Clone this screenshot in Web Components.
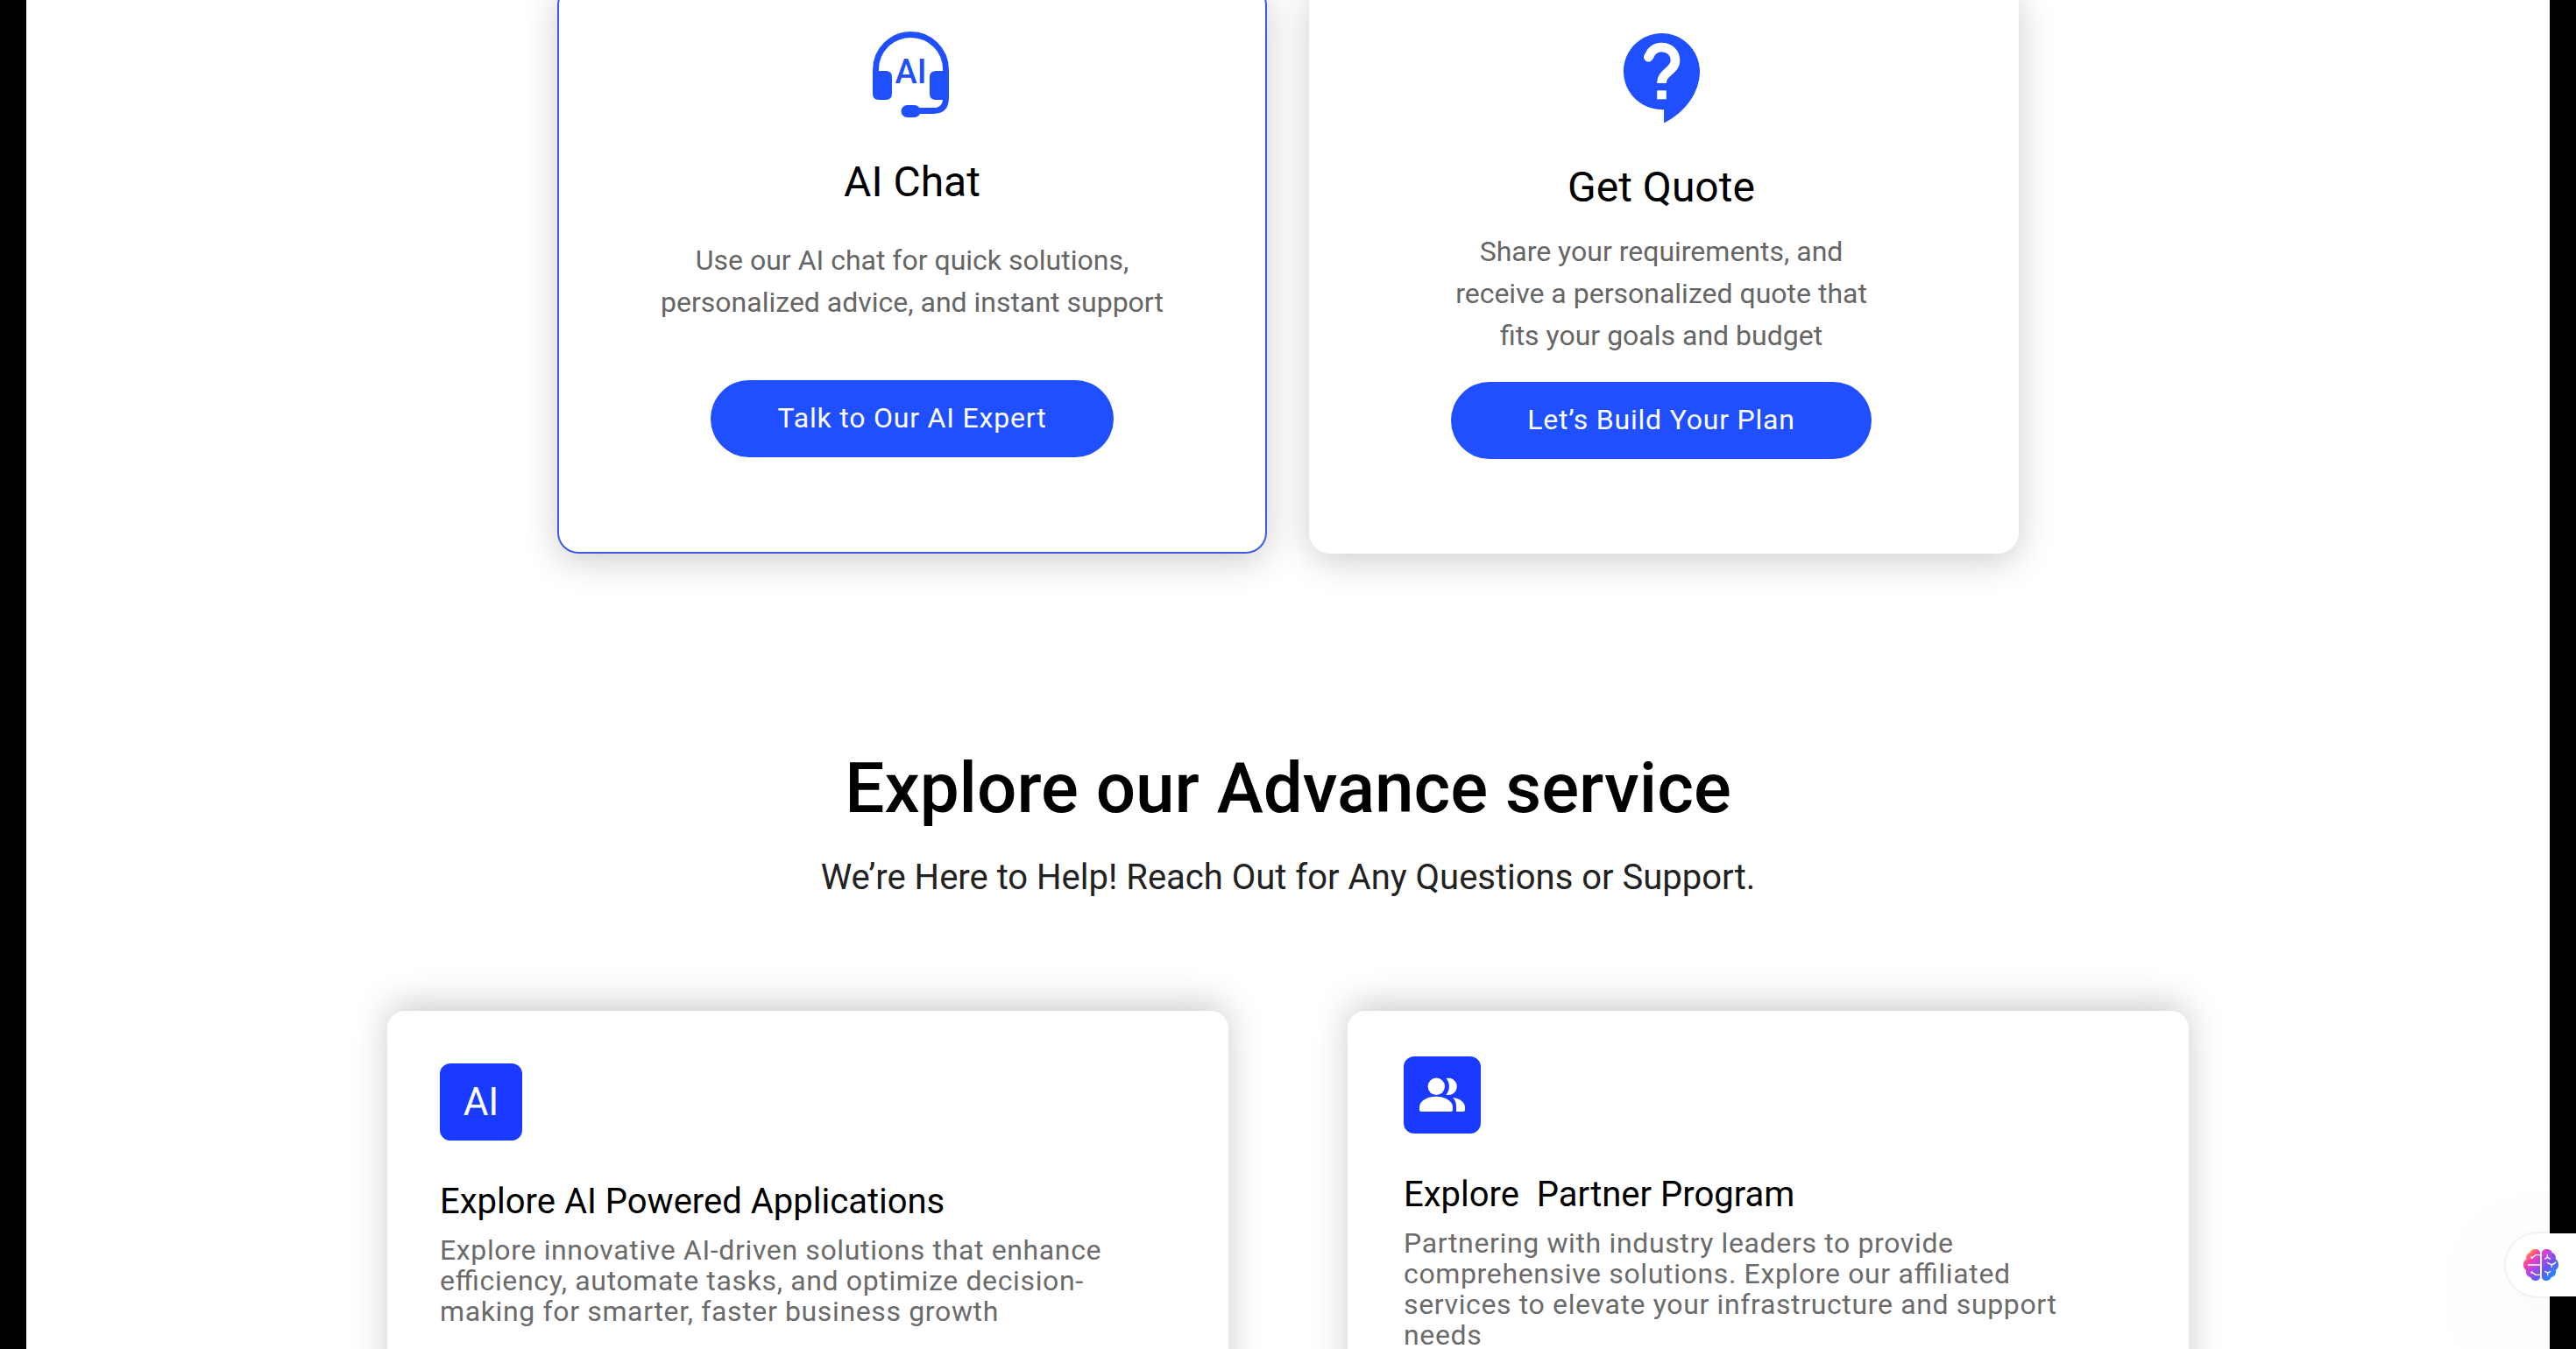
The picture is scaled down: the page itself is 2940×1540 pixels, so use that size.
<!DOCTYPE html>
<html lang="en">
<head>
<meta charset="utf-8">
<title>Advance service</title>
<style>
  html, body { margin: 0; background: #000; }
  body { font-family: Roboto, "Liberation Sans", sans-serif; color: #000; }
</style>
</head>
<body>
<service-page></service-page>

<template id="t-service-page">
  <style>
    :host { display: block; }
    main { box-sizing: border-box; height: 100vh; margin: 0 30px; overflow: hidden; background: #fff; }
    .contact { display: grid; grid-template-columns: 1fr 1fr; gap: 48px; max-width: 1668px; margin: -18px auto 220px; }
    .services { display: grid; grid-template-columns: 1fr 1fr; gap: 136px; max-width: 2056px; margin: 128px auto 0; }
    .quote { --text-gap: 21px; --action-gap: 29px; --text-width: 500px; --action-width: 480px; --inset-end: 6px; }
    .partner { --pad-top: 52px; --pad-start: 64px; --badge-width: 88px; }
    svg { display: block; }
  </style>
  <main>
    <section class="contact">
      <contact-card class="chat" selected>
        <svg slot="icon" width="90" height="100" viewBox="0 0 90 100" fill="#1f4fff" aria-hidden="true">
          <path d="M3.500 62V43.500a40 40 0 0 1 80 0V76q0 14.500-14.500 14.500H46" fill="none" stroke="#1f4fff" stroke-width="6.800"/>
          <path d="M0 45h15q7 0 7 7v19q0 7-7 7H7q-7 0-7-7z"/>
          <path d="M87 45H72q-7 0-7 7v19q0 7 7 7h15z"/>
          <rect x="32.500" y="84" width="22" height="14" rx="7"/>
          <text x="43.500" y="59" font-size="38" font-weight="500" text-anchor="middle">AI</text>
        </svg>
        <span slot="title">AI Chat</span>
        Use our AI chat for quick solutions, personalized advice, and instant support
        <span slot="action">Talk to Our AI Expert</span>
      </contact-card>
      <contact-card class="quote">
        <svg slot="icon" width="87" height="106" viewBox="0 0 87 106" aria-hidden="true">
          <path transform="translate(-15.350 -8.200) scale(5.118)" fill="#1f4fff" d="M11.500 2C6.810 2 3 5.810 3 10.500S6.810 19 11.500 19h.5v3c4.860-2.340 8-7 8-11.500C20 5.810 16.190 2 11.500 2z"/>
          <path d="M28.500 30C31 22 36 18 43.500 18c9 0 15.500 6.500 15.500 15C59 45 43.500 46 43.500 59" fill="none" stroke="#fff" stroke-width="10.600"/>
          <circle cx="28.300" cy="29.300" r="5.300" fill="#fff"/>
          <rect x="38.200" y="67.300" width="10.600" height="10" fill="#fff"/>
        </svg>
        <span slot="title">Get Quote</span>
        Share your requirements, and receive a personalized quote that fits your goals and budget
        <span slot="action">Let’s Build Your Plan</span>
      </contact-card>
    </section>

    <section-heading>
      <span slot="title">Explore our Advance service</span>
      We’re Here to Help! Reach Out for Any Questions or Support.
    </section-heading>

    <section class="services">
      <service-card>
        <span slot="badge">AI</span>
        <span slot="title">Explore AI Powered Applications</span>
        Explore innovative AI-driven solutions that enhance efficiency, automate tasks, and optimize decision-making for smarter, faster business growth
      </service-card>
      <service-card class="partner">
        <svg slot="badge" width="88" height="88" viewBox="0 0 88 88" fill="#fff" aria-hidden="true">
          <circle cx="37.300" cy="34.300" r="9.700"/>
          <path d="M18 61v-3c0-8 10-12.300 19-12.300S56 50 56 58v3q0 2-2 2H20q-2 0-2-2z"/>
          <path d="M48.500 25a9.700 9.700 0 1 1 0 18.700a14.500 14.500 0 0 0 0-18.700z"/>
          <path d="M56 47c8 1 14 5 14 11v3q0 2-2 2h-8v-5c0-5-1-8-4-11z"/>
        </svg>
        <span slot="title">Explore  Partner Program</span>
        Partnering with industry leaders to provide comprehensive solutions. Explore our affiliated services to elevate your infrastructure and support needs
      </service-card>
    </section>
  </main>
  <assistant-tab></assistant-tab>
</template>

<template id="t-contact-card">
  <style>
    :host {
      display: flex; flex-direction: column; align-items: center; box-sizing: border-box;
      padding: 54px var(--inset-end, 0) 108px 0; border-radius: 24px; background: #fff;
      box-shadow: 0 8px 40px rgba(0, 0, 0, .2);
    }
    :host([selected]) { outline: 2px solid #3f5ae8; outline-offset: -2px; }
    h3 { margin: 44px 0 0; font-size: 48px; line-height: 56px; font-weight: 400; }
    p { margin: var(--text-gap, 37px) 0 0; max-width: var(--text-width, 600px); font-size: 32px; line-height: 48px; color: #666; text-align: center; }
    button {
      margin: var(--action-gap, 65px) 0 0; width: var(--action-width, 460px); height: 88px; padding: 0 0 2px;
      border: 0; border-radius: 44px; background: #1f4fff; color: #fff;
      font-family: inherit; font-size: 32px; line-height: 40px; letter-spacing: .025em;
    }
  </style>
  <slot name="icon"></slot>
  <h3><slot name="title"></slot></h3>
  <p><slot></slot></p>
  <button type="button"><slot name="action"></slot></button>
</template>

<template id="t-section-heading">
  <style>
    :host { display: block; text-align: center; }
    h2 { margin: 0; font-size: 80px; line-height: 96px; font-weight: 500; }
    p { margin: 30px 0 0; font-size: 40px; line-height: 48px; color: #222; }
  </style>
  <h2><slot name="title"></slot></h2>
  <p><slot></slot></p>
</template>

<template id="t-service-card">
  <style>
    :host {
      display: block; box-sizing: border-box; min-height: 480px;
      padding: var(--pad-top, 60px) 60px 60px var(--pad-start, 60px);
      border-radius: 20px; background: #fff; box-shadow: 0 -8px 40px rgba(0, 0, 0, .2);
    }
    .badge {
      display: flex; align-items: center; justify-content: center;
      width: var(--badge-width, 94px); height: 88px; border-radius: 12px;
      background: #1a3bff; color: #fff; font-size: 44px; line-height: 52px;
    }
    h3 { margin: 46px 0 0; font-size: 40px; line-height: 48px; font-weight: 400; white-space: pre-wrap; }
    p { margin: 14px 0 0; max-width: 780px; font-size: 32px; line-height: 35px; letter-spacing: .02em; font-feature-settings: "liga" 1; color: #6b6b6b; }
  </style>
  <div class="badge"><slot name="badge"></slot></div>
  <h3><slot name="title"></slot></h3>
  <p><slot></slot></p>
</template>

<template id="t-assistant-tab">
  <style>
    :host { position: fixed; right: 0; bottom: 60px; display: block; }
    button {
      display: flex; align-items: center; box-sizing: border-box; width: 80px; height: 72px; padding: 0 20px;
      border: 0; border-radius: 36px 0 0 36px; background: #fff;
      box-shadow: 0 0 4px rgba(0, 0, 0, .14), 0 30px 140px rgba(0, 0, 0, .08);
    }
    svg { display: block; flex: none; }
  </style>
  <button type="button" aria-label="Open assistant">
    <svg width="40" height="36" viewBox="0 0 120 108" aria-hidden="true">
      <defs>
        <linearGradient id="g" gradientUnits="userSpaceOnUse" x1="18" y1="6" x2="104" y2="92">
          <stop offset="0" stop-color="#ff9340"/>
          <stop offset=".22" stop-color="#fb3fa6"/>
          <stop offset=".45" stop-color="#b445ea"/>
          <stop offset=".7" stop-color="#6a55f5"/>
          <stop offset="1" stop-color="#1c8cff"/>
        </linearGradient>
      </defs>
      <g fill="url(#g)">
        <path d="M57 12C57 4 50 0 42 0 30 0 23 6 22 12 12 15 8 24 10 34 2 40 0 46 0 54c0 8 3 14 9 18-2 14 5 22 15 24 4 8 10 12 16 12 10 0 17-5 17-13z"/>
        <path d="M63 12C63 4 70 0 78 0c12 0 19 6 20 12 10 3 14 12 12 22 8 6 10 12 10 20 0 8-3 14-9 18 2 14-5 22-15 24-4 8-10 12-16 12-10 0-17-5-17-13z"/>
      </g>
      <g fill="none" stroke="#fff" stroke-width="4">
        <path d="M58 20H42L30 29M58 54H20M58 88H42L30 80"/>
        <path d="M82 17v11l-9 6M82 28l11 6M81 46l14 7c8 0 13-4 16-9M97 53v10M73 76l10 5 10-5M83 81v10"/>
      </g>
      <g fill="#fff"><circle cx="29" cy="29" r="4"/><circle cx="19" cy="54" r="4"/><circle cx="29" cy="80" r="4"/></g>
    </svg>
  </button>
</template>

<script>
  for (const name of ['contact-card', 'section-heading', 'service-card', 'assistant-tab', 'service-page']) {
    customElements.define(name, class extends HTMLElement {
      constructor() {
        super();
        const template = document.getElementById('t-' + name);
        this.attachShadow({ mode: 'open' }).append(document.importNode(template.content, true));
      }
    });
  }
</script>
</body>
</html>
